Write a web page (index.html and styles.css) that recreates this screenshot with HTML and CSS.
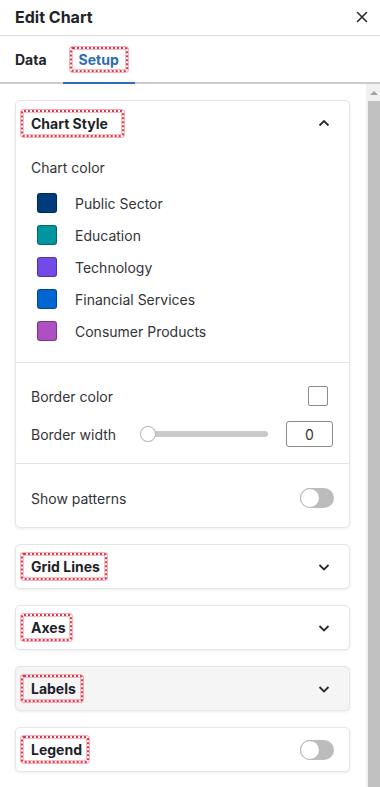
FILE: index.html
```html
<!DOCTYPE html>
<html lang="en">
<head>
<meta charset="utf-8">
<title>Edit Chart</title>
<link rel="stylesheet" href="styles.css">
</head>
<body>
<div class="panel">
  <div class="header">
    <span class="title">Edit Chart</span>
    <svg class="close" width="12" height="12" viewBox="0 0 12 12"><path d="M1.5 1.5 L10.5 10.5 M10.5 1.5 L1.5 10.5" stroke="#2b2b33" stroke-width="1.6" fill="none" stroke-linecap="round"/></svg>
  </div>
  <div class="tabs">
    <div class="tab first">Data</div>
    <div class="tab active"><span class="hl hl-tab">Setup</span></div>
  </div>
  <div class="scroll">
    <div class="content">
      <div class="card">
        <div class="card-head big">
          <span class="hl hl-wide">Chart Style</span>
          <svg class="chev" width="18" height="18" viewBox="0 0 18 18"><path d="M4.5 11.5 L9 7 L13.5 11.5" stroke="#2b2b33" stroke-width="1.8" fill="none"/></svg>
        </div>
        <div class="section first-sec">
          <div class="label-line">Chart color</div>
          <div class="swatches">
            <div class="sw-row"><span class="swatch s1"></span><span>Public Sector</span></div>
            <div class="sw-row"><span class="swatch s2"></span><span>Education</span></div>
            <div class="sw-row"><span class="swatch s3"></span><span>Technology</span></div>
            <div class="sw-row"><span class="swatch s4"></span><span>Financial Services</span></div>
            <div class="sw-row"><span class="swatch s5"></span><span>Consumer Products</span></div>
          </div>
        </div>
        <div class="section border-sec">
          <div class="row">
            <span>Border color</span>
            <span class="color-box"></span>
          </div>
          <div class="row">
            <span>Border width</span>
            <div class="slider"><span class="thumb"></span><span class="track"></span></div>
            <div class="num">0</div>
          </div>
        </div>
        <div class="section pattern-sec">
          <div class="row tall">
            <span>Show patterns</span>
            <span class="toggle"><span class="knob"></span></span>
          </div>
        </div>
      </div>

      <div class="card">
        <div class="card-head">
          <span class="hl">Grid Lines</span>
          <svg class="chev" width="18" height="18" viewBox="0 0 18 18"><path d="M4.5 7 L9 11.5 L13.5 7" stroke="#2b2b33" stroke-width="1.8" fill="none"/></svg>
        </div>
      </div>

      <div class="card">
        <div class="card-head">
          <span class="hl">Axes</span>
          <svg class="chev" width="18" height="18" viewBox="0 0 18 18"><path d="M4.5 7 L9 11.5 L13.5 7" stroke="#2b2b33" stroke-width="1.8" fill="none"/></svg>
        </div>
      </div>

      <div class="card hover">
        <div class="card-head">
          <span class="hl">Labels</span>
          <svg class="chev" width="18" height="18" viewBox="0 0 18 18"><path d="M4.5 7 L9 11.5 L13.5 7" stroke="#2b2b33" stroke-width="1.8" fill="none"/></svg>
        </div>
      </div>

      <div class="card">
        <div class="card-head">
          <span class="hl">Legend</span>
          <span class="toggle"><span class="knob"></span></span>
        </div>
      </div>
    </div>
    <div class="scrollbar">
      <div class="sb-btn"><span class="arrow"></span></div>
      <div class="sb-thumb"></div>
    </div>
  </div>
</div>
</body>
</html>
```

FILE: styles.css
```css
* { box-sizing: border-box; }
html, body {
  margin: 0;
  padding: 0;
  background: #fff;
}
body {
  font-family: Inter, "Noto Sans", "Liberation Sans", sans-serif;
  font-size: 14px;
  color: #333338;
  width: 380px;
  height: 787px;
  overflow: hidden;
}
.panel {
  display: flex;
  flex-direction: column;
  height: 787px;
}
.header {
  height: 36px;
  flex: none;
  border-bottom: 1px solid #d9d9d9;
  display: flex;
  align-items: center;
  justify-content: space-between;
  padding: 0 12px 1px 15px;
}
.title {
  font-size: 16px;
  font-weight: 700;
  color: #22222b;
}
.close { display: block; }
.tabs {
  flex: none;
  height: 48px;
  border-bottom: 2px solid #cccccc;
  display: flex;
}
.tab {
  display: flex;
  align-items: center;
  padding: 0 16px;
  height: 48px;
  margin-bottom: -2px;
  border-bottom: 2px solid transparent;
  font-weight: 700;
  color: #22222b;
}
.tab.first { padding-left: 15px; }
.tab.active {
  color: #2d6cb5;
  border-bottom-color: #2d6cb5;
}
.hl {
  display: inline-block;
  padding: 3px 5px 3px 8px;
  margin-left: -10px;
  border: 2px dotted #e0364b;
  border-radius: 3px;
  box-shadow: 0 0 0 1px rgba(240, 110, 125, 0.55), inset 0 0 0 1px rgba(240, 110, 125, 0.45);
  line-height: 17px;
}
.hl-tab {
  padding: 2px 7px;
  margin: 0 -9px;
}
.hl-wide { padding-right: 14px; }
.scroll {
  flex: 1;
  min-height: 0;
  display: flex;
}
.content {
  flex: 1;
  overflow: hidden;
  padding: 16px 16px 0 15px;
  display: flex;
  flex-direction: column;
  gap: 16px;
}
.card {
  flex: none;
  background: #fff;
  border: 1px solid #e6e6e6;
  border-radius: 5px;
  box-shadow: 0 1px 3px rgba(0, 0, 0, 0.08);
}
.card.hover { background: #f5f5f5; }
.card-head {
  height: 43px;
  display: flex;
  align-items: center;
  justify-content: space-between;
  padding: 0 16px 0 15px;
  font-weight: 700;
  color: #1f1f2a;
}
.card-head.big { height: 44px; }
.chev { display: block; }
.section {
  padding: 16px 16px 12px 15px;
  border-top: 1px solid #e2e2e2;
}
.section.first-sec {
  border-top: none;
  padding: 13px 16px 15px 15px;
}
.section.pattern-sec { padding-bottom: 11px; }
.label-line {
  line-height: 20px;
  margin-bottom: 9px;
}
.swatches { padding-left: 6px; }
.sw-row {
  height: 32px;
  display: flex;
  align-items: center;
  gap: 18px;
}
.swatch {
  width: 20px;
  height: 20px;
  border-radius: 3px;
  border: 1px solid rgba(0, 0, 0, 0.3);
}
.s1 { background: #003c7d; }
.s2 { background: #00969f; }
.s3 { background: #7349e8; }
.s4 { background: #0066d0; }
.s5 { background: #ae4fc2; }
.border-sec .row + .row { margin-top: 4px; }
.row {
  height: 34px;
  display: flex;
  align-items: center;
  justify-content: space-between;
}
.row.tall { height: 36px; }
.color-box {
  width: 20px;
  height: 20px;
  border: 1px solid #8c8c8c;
  border-radius: 2px;
  margin-right: 5px;
}
.slider {
  flex: 1;
  display: flex;
  align-items: center;
  margin: 0 18px 0 24px;
}
.thumb {
  width: 16px;
  height: 16px;
  border-radius: 50%;
  background: #fff;
  border: 1px solid #bdbdbd;
  box-shadow: 0 0 1px rgba(0, 0, 0, 0.2);
  position: relative;
  z-index: 1;
  flex: none;
}
.track {
  flex: 1;
  height: 6px;
  border-radius: 3px;
  background: #c9c9c9;
  margin-left: -8px;
}
.num {
  width: 47px;
  height: 26px;
  border: 1px solid #8a8a8a;
  border-radius: 3px;
  display: flex;
  align-items: center;
  justify-content: center;
  color: #333;
}
.toggle {
  width: 34px;
  height: 20px;
  border-radius: 10px;
  background: #bcbcbc;
  display: flex;
  align-items: center;
  margin-right: -1px;
}
.knob {
  width: 20px;
  height: 20px;
  border-radius: 50%;
  background: #fff;
  border: 1px solid #b5b5b5;
}
.scrollbar {
  width: 14px;
  flex: none;
  background: #f1f1f1;
  display: flex;
  flex-direction: column;
}
.sb-btn {
  height: 17px;
  display: flex;
  align-items: center;
  justify-content: center;
  padding-left: 2px;
}
.arrow {
  width: 0;
  height: 0;
  border-left: 4px solid transparent;
  border-right: 4px solid transparent;
  border-bottom: 4px solid #a3a3a3;
}
.sb-thumb {
  flex: 1;
  background: #c1c1c1;
  margin-left: 2px;
}
```
